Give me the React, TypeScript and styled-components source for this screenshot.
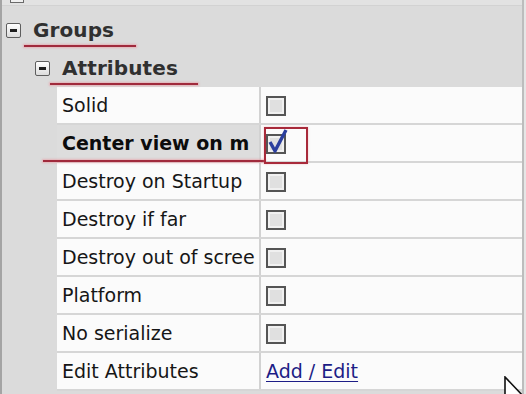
import React from "react";
import styled, { createGlobalStyle, css } from "styled-components";

const Global = createGlobalStyle`
  html, body { margin: 0; padding: 0; background: #e6e6e6; }
  body { width: 526px; height: 394px; overflow: hidden; }
`;

const Page = styled.div`
  position: relative;
  width: 520px;
  height: 394px;
  background: #dbdbdb;
  border-left: 2px solid #a4a4a4;
  border-right: 2px solid #bdbdbd;
  overflow: hidden;
  font-family: "DejaVu Sans", Verdana, sans-serif;
  color: #161616;
`;

const TopRow = styled.div`
  height: 5px;
  padding-left: 8px;
  border-bottom: 1px solid #d2d2d2;
  background: #e2e2e2;
`;

const BoxFragment = styled.div`
  width: 12px;
  height: 2px;
  border: 1px solid #6a6a6a;
  border-top: none;
  background: #f0f0f0;
`;

const HeaderRow = styled.div<{ $indent: number; $top: number }>`
  display: flex;
  align-items: center;
  gap: 12px;
  height: 38px;
  padding-top: ${(p) => p.$top}px;
  padding-left: ${(p) => p.$indent}px;
`;

const ToggleBox = styled.div`
  position: relative;
  width: 13px;
  height: 13px;
  border: 1px solid #5e5e5e;
  border-radius: 2px;
  background: linear-gradient(#ffffff, #dcdcdc);
  flex: none;
  &::after {
    content: "";
    position: absolute;
    left: 3px;
    top: 5px;
    width: 7px;
    height: 3px;
    background: #1e1e1e;
  }
`;

const HeaderText = styled.span`
  font-weight: bold;
  font-size: 20px;
  color: #303030;
  letter-spacing: 0.1px;
`;

const Table = styled.div`
  margin-left: 55px;
  display: flex;
  flex-direction: column;
`;

const Row = styled.div`
  display: grid;
  grid-template-columns: 202px 2px 1fr;
  height: 38px;
  box-sizing: border-box;
  border-bottom: 2px solid #d6d6d6;
  background: #fbfbfb;
`;

const LabelCell = styled.div<{ $selected?: boolean }>`
  display: flex;
  align-items: center;
  padding-left: 5px;
  white-space: nowrap;
  overflow: hidden;
  font-size: 19px;
  ${(p) =>
    p.$selected &&
    css`
      background: #dddddd;
      font-weight: bold;
      color: #0c0c0c;
    `}
`;

const Divider = styled.div`
  background: #d2d2d2;
`;

const ValueCell = styled.div`
  display: flex;
  align-items: center;
  padding-left: 5px;
  font-size: 19px;
`;

const Check = styled.div`
  position: relative;
  width: 16px;
  height: 16px;
  border: 2px solid #555555;
  background: #e0e0e0;
  box-shadow: inset 0 0 0 2px #f0f0f0;
  margin-top: 2px;
`;

const CheckedMark = styled.svg`
  position: absolute;
  left: 0px;
  top: -8px;
`;

const Link = styled.a`
  color: #1d1d86;
  text-decoration: underline;
  text-underline-offset: 3px;
  cursor: pointer;
`;

const RedLine = styled.div<{ $x: number; $y: number; $w: number }>`
  position: absolute;
  left: ${(p) => p.$x}px;
  top: ${(p) => p.$y}px;
  width: ${(p) => p.$w}px;
  height: 2px;
  background: #a02a3c;
  box-shadow: 0 0 2px 1px rgba(240, 140, 150, 0.5);
`;

const RedBox = styled.div`
  position: absolute;
  left: 262px;
  top: 127px;
  width: 40px;
  height: 33px;
  border: 2px solid #a82a3a;
  box-shadow: 0 0 2px rgba(240, 140, 150, 0.5);
`;

const Cursor = styled.svg`
  position: absolute;
  left: 501px;
  top: 376px;
`;

type Item = {
  label: string;
  kind: "check" | "link";
  checked?: boolean;
  selected?: boolean;
};

const items: Item[] = [
  { label: "Solid", kind: "check" },
  { label: "Center view on m", kind: "check", checked: true, selected: true },
  { label: "Destroy on Startup", kind: "check" },
  { label: "Destroy if far", kind: "check" },
  { label: "Destroy out of scree", kind: "check" },
  { label: "Platform", kind: "check" },
  { label: "No serialize", kind: "check" },
  { label: "Edit Attributes", kind: "link" },
];

function CheckBox({ checked }: { checked?: boolean }) {
  return (
    <Check>
      {checked && (
        <CheckedMark width="20" height="26" viewBox="0 0 20 26">
          <path
            d="M2 14 L7 23 L18 2"
            fill="none"
            stroke="#2b3f9e"
            strokeWidth="3.4"
            strokeLinejoin="round"
          />
        </CheckedMark>
      )}
    </Check>
  );
}

export default function App() {
  return (
    <>
      <Global />
      <Page>
        <TopRow>
          <BoxFragment />
        </TopRow>
        <HeaderRow $indent={4} $top={5}>
          <ToggleBox />
          <HeaderText>Groups</HeaderText>
        </HeaderRow>
        <HeaderRow $indent={33} $top={0}>
          <ToggleBox />
          <HeaderText>Attributes</HeaderText>
        </HeaderRow>
        <Table>
          {items.map((it) => (
            <Row key={it.label}>
              <LabelCell $selected={it.selected}>{it.label}</LabelCell>
              <Divider />
              <ValueCell>
                {it.kind === "check" ? (
                  <CheckBox checked={it.checked} />
                ) : (
                  <Link>Add / Edit</Link>
                )}
              </ValueCell>
            </Row>
          ))}
        </Table>

        <RedLine $x={22} $y={45} $w={112} />
        <RedLine $x={48} $y={83} $w={148} />
        <RedLine $x={41} $y={160} $w={222} />
        <RedBox />

        <Cursor width="25" height="20" viewBox="0 0 25 20">
          <path d="M2 1 L2 30 L9 23 L22 22 Z" fill="#ffffff" stroke="#111" strokeWidth="1.6" />
        </Cursor>
      </Page>
    </>
  );
}
